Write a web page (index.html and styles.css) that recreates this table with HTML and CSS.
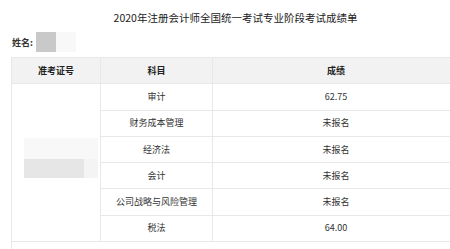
FILE: index.html
```html
<!DOCTYPE html>
<html lang="zh-CN">
<head>
    <meta charset="UTF-8">
    <meta name="viewport" content="width=device-width, initial-scale=1.0">
    <title>成绩单</title>
    <link rel="stylesheet" href="styles.css">
</head>
<body>

    <div class="sheet">
        <h1 class="title">2020年注册会计师全国统一考试专业阶段考试成绩单</h1>

        <div class="name-line">
            <span class="name-label">姓名:</span>
            <span class="mosaic name-mosaic">
                <i class="m1"></i><i class="m0"></i>
            </span>
        </div>

        <table class="scores">
            <colgroup>
                <col class="c-id">
                <col class="c-subject">
                <col class="c-score">
            </colgroup>
            <thead>
                <tr>
                    <th>准考证号</th>
                    <th>科目</th>
                    <th>成绩</th>
                </tr>
            </thead>
            <tbody>
                <tr>
                    <td rowspan="6" class="id-cell">
                        <span class="mosaic id-mosaic">
                            <i class="m0"></i><i class="m0"></i><i class="m0"></i><i class="m0"></i>
                            <i class="m2"></i><i class="m2"></i><i class="m2"></i><i class="m3"></i>
                        </span>
                    </td>
                    <td>审计</td>
                    <td>62.75</td>
                </tr>
                <tr><td>财务成本管理</td><td>未报名</td></tr>
                <tr><td>经济法</td><td>未报名</td></tr>
                <tr><td>会计</td><td>未报名</td></tr>
                <tr><td>公司战略与风险管理</td><td>未报名</td></tr>
                <tr><td>税法</td><td>64.00</td></tr>
                <tr><td colspan="3" class="blank"></td></tr>
            </tbody>
        </table>
    </div>

</body>
</html>
```

FILE: styles.css
```css
html, body {
    margin: 0;
    overflow: hidden;
    background: #fff;
}
body {
    font-family: "Noto Sans CJK SC", "Noto Sans", sans-serif;
    color: #333;
}
.sheet {
    width: 449px;
    margin-left: 11px;
}
.title {
    margin: 0;
    padding-top: 11px;
    font-size: 10.5px;
    line-height: 14px;
    font-weight: normal;
    color: #222;
    text-align: center;
}
.name-line {
    display: flex;
    align-items: center;
    height: 20px;
    margin-top: 7px;
    margin-left: 1px;
}
.name-label {
    font-size: 9px;
    font-weight: bold;
    width: 24px;
}
.mosaic {
    display: grid;
}
.mosaic i {
    display: block;
}
.name-mosaic {
    grid-template-columns: 20px 20px;
    height: 20px;
}
.id-mosaic {
    grid-template-columns: 20px 20px 20px 14px;
    grid-template-rows: 21px 19px;
    width: 74px;
    margin-left: 12px;
}
.m0 { background: #f8f8f8; }
.m1 { background: #c9c9c9; }
.m2 { background: #e6e6e6; }
.m3 { background: #f4f4f4; }

.scores {
    width: 449px;
    margin-top: 5px;
    border-collapse: collapse;
    font-size: 9px;
}
.c-id { width: 89px; }
.c-subject { width: 112px; }
.scores th,
.scores td {
    height: 25.3px;
    padding: 0;
    border: 1px solid #e8e8e8;
    text-align: center;
    line-height: 12px;
}
.scores th {
    background: #f2f2f2;
    font-weight: bold;
    color: #222;
}
.scores td.id-cell {
    vertical-align: top;
    padding-top: 54px;
}
.scores td.blank {
    border-right: none;
}
```
